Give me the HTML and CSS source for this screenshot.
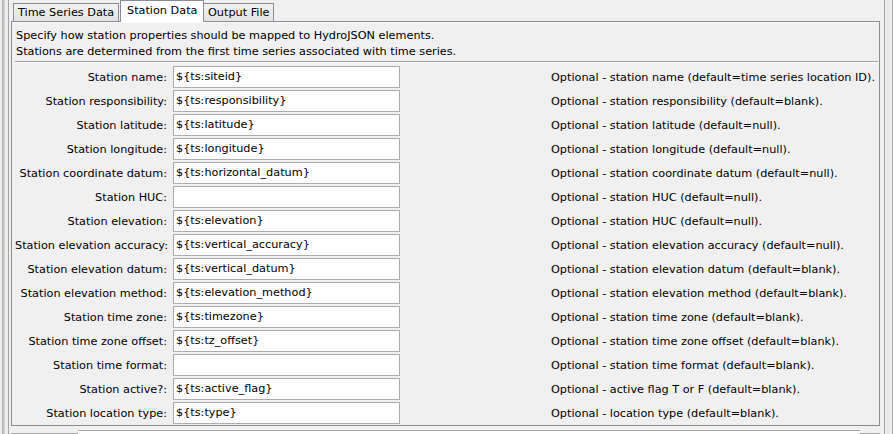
FILE: index.html
```html
<!DOCTYPE html>
<html>
<head>
<meta charset="utf-8">
<link rel="stylesheet" href="styles.css">
</head>
<body>
<div class="frame">
  <div class="edge-left"></div>
  <div class="outer">
    <div class="tabs">
      <div class="tab tab-first">Time Series Data</div>
      <div class="tab tab-active">Station Data</div>
      <div class="tab tab-last">Output File</div>
    </div>
    <div class="panel">
      <div class="intro">
        <div class="line">Specify how station properties should be mapped to HydroJSON elements.</div>
        <div class="line">Stations are determined from the first time series associated with time series.</div>
      </div>
      <div class="sep"></div>
      <div class="form">
        <label class="lbl">Station name:</label><div class="field">${ts:siteid}</div><div class="desc">Optional - station name (default=time series location ID).</div>
        <label class="lbl">Station responsibility:</label><div class="field">${ts:responsibility}</div><div class="desc">Optional - station responsibility (default=blank).</div>
        <label class="lbl">Station latitude:</label><div class="field">${ts:latitude}</div><div class="desc">Optional - station latitude (default=null).</div>
        <label class="lbl">Station longitude:</label><div class="field">${ts:longitude}</div><div class="desc">Optional - station longitude (default=null).</div>
        <label class="lbl">Station coordinate datum:</label><div class="field">${ts:horizontal_datum}</div><div class="desc">Optional - station coordinate datum (default=null).</div>
        <label class="lbl">Station HUC:</label><div class="field"></div><div class="desc">Optional - station HUC (default=null).</div>
        <label class="lbl">Station elevation:</label><div class="field">${ts:elevation}</div><div class="desc">Optional - station HUC (default=null).</div>
        <label class="lbl">Station elevation accuracy:</label><div class="field">${ts:vertical_accuracy}</div><div class="desc">Optional - station elevation accuracy (default=null).</div>
        <label class="lbl">Station elevation datum:</label><div class="field">${ts:vertical_datum}</div><div class="desc">Optional - station elevation datum (default=blank).</div>
        <label class="lbl">Station elevation method:</label><div class="field">${ts:elevation_method}</div><div class="desc">Optional - station elevation method (default=blank).</div>
        <label class="lbl">Station time zone:</label><div class="field">${ts:timezone}</div><div class="desc">Optional - station time zone (default=blank).</div>
        <label class="lbl">Station time zone offset:</label><div class="field">${ts:tz_offset}</div><div class="desc">Optional - station time zone offset (default=blank).</div>
        <label class="lbl">Station time format:</label><div class="field"></div><div class="desc">Optional - station time format (default=blank).</div>
        <label class="lbl">Station active?:</label><div class="field">${ts:active_flag}</div><div class="desc">Optional - active flag T or F (default=blank).</div>
        <label class="lbl">Station location type:</label><div class="field">${ts:type}</div><div class="desc">Optional - location type (default=blank).</div>
      </div>
    </div>
    <div class="below">
      <div class="below-box"><span class="peek">TSID Alias ${ts:siteid} ${ts:type} lat lon</span></div>
    </div>
  </div>
  <div class="edge-right"></div>
</div>
</body>
</html>
```

FILE: styles.css
```css
html, body {
  margin: 0;
  padding: 0;
}

body {
  width: 893px;
  height: 434px;
  overflow: hidden;
  background: #f0f0f0;
  font-family: "DejaVu Sans", "Liberation Sans", sans-serif;
  font-size: 11.25px;
  color: #000;
}

.frame {
  display: flex;
  height: 434px;
}

.edge-left {
  width: 8px;
  flex: none;
  background: linear-gradient(to right, #ececec 0, #ececec 2px, #b4b4b4 2px, #c4c4c4 4px, #e2e2e2 5px, #ececec 5px);
}

.outer {
  flex: none;
  border-left: 1px solid #a3a3a3;
  border-right: 1px solid #a3a3a3;
  padding: 0 4px 0 2px;
  box-sizing: border-box;
  width: 877px;
  display: flex;
  flex-direction: column;
}

.edge-right {
  width: 8px;
  flex: none;
  box-sizing: border-box;
  background: #ececec;
  border-right: 1px solid #a8a8a8;
}

/* Tabs */
.tabs {
  display: flex;
  align-items: flex-end;
  height: 21px;
  padding-left: 2px;
  position: relative;
  z-index: 1;
}

.tab {
  box-sizing: border-box;
  height: 18px;
  border: 1px solid #898c95;
  border-bottom: none;
  background: linear-gradient(#f2f2f2, #e3e3e3);
  padding: 0 4px;
  line-height: 17px;
  white-space: nowrap;
  overflow: hidden;
}

.tab-first {
  width: 106px;
}

.tab-active {
  height: 22px;
  margin: 0 0 -1px 1px;
  background: #ffffff;
  line-height: 19px;
  padding: 0 6px;
  width: 84px;
  position: relative;
  z-index: 2;
}

.tab-last {
  width: 70px;
  border-left: none;
}

/* Panel */
.panel {
  box-sizing: border-box;
  height: 405px;
  border: 1px solid #898c95;
  background: #f0f0f0;
  padding: 6px 1px 0 3px;
  box-shadow: inset 0 1px 0 #fcfcfc;
}

.intro .line {
  height: 16px;
  line-height: 16px;
  padding-left: 1px;
  white-space: nowrap;
}

.sep {
  height: 1px;
  margin-top: 1px;
  background: #a0a0a0;
  border-bottom: 1px solid #ffffff;
  margin-bottom: 2px;
}

.form {
  display: grid;
  grid-template-columns: 155px 227px 1fr;
  grid-auto-rows: 24px;
  column-gap: 3px;
  align-items: center;
}

.lbl {
  text-align: right;
  padding-right: 3px;
  white-space: nowrap;
}

.field {
  box-sizing: border-box;
  height: 22px;
  background: #ffffff;
  border: 1px solid #acacac;
  padding: 0 2px;
  line-height: 20px;
  white-space: nowrap;
  overflow: hidden;
}

.desc {
  padding-left: 148px;
  white-space: nowrap;
}

/* Below area */
.below {
  flex: 1;
  border-bottom: 1px solid #a3a3a3;
  position: relative;
}

.below-box {
  position: absolute;
  left: 67px;
  top: 4px;
  width: 782px;
  height: 20px;
  background: #ffffff;
  border-top: 1px solid #a8a8a8;
  overflow: hidden;
}

.peek {
  display: block;
  padding-left: 30px;
  margin-top: 2px;
  font-size: 12px;
  line-height: 14px;
  white-space: nowrap;
  word-spacing: 60px;
}
```
